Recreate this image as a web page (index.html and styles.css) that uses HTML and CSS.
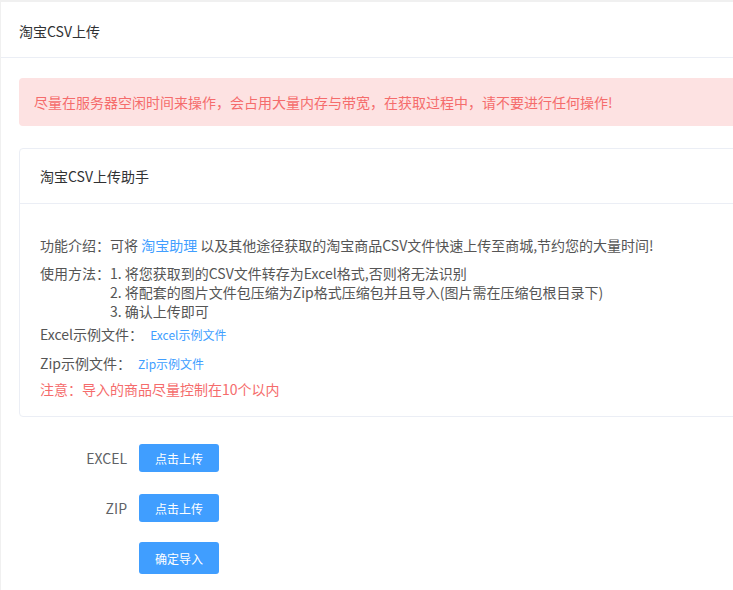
FILE: index.html
```html
<!DOCTYPE html>
<html lang="zh-CN">
<head>
    <meta charset="UTF-8">
    <meta name="viewport" content="width=device-width, initial-scale=1.0">
    <title>淘宝CSV上传</title>
    <link rel="stylesheet" href="styles.css">
</head>
<body>
    <div class="page">
        <div class="page-header">淘宝CSV上传</div>
        <div class="page-main">
            <div class="wide">
                <div class="alert">尽量在服务器空闲时间来操作，会占用大量内存与带宽，在获取过程中，请不要进行任何操作!</div>
                <div class="card">
                    <div class="card-header">淘宝CSV上传助手</div>
                    <div class="card-body">
                        <p class="intro">功能介绍：可将 <a class="link" href="#">淘宝助理</a> 以及其他途径获取的淘宝商品CSV文件快速上传至商城,节约您的大量时间!</p>
                        <div class="usage">
                            <span class="usage-label">使用方法：</span>
                            <div class="usage-steps">
                                <div>1. 将您获取到的CSV文件转存为Excel格式,否则将无法识别</div>
                                <div>2. 将配套的图片文件包压缩为Zip格式压缩包并且导入(图片需在压缩包根目录下)</div>
                                <div>3. 确认上传即可</div>
                            </div>
                        </div>
                        <p class="sample sample-excel">Excel示例文件： <a class="link small" href="#">Excel示例文件</a></p>
                        <p class="sample sample-zip">Zip示例文件： <a class="link small" href="#">Zip示例文件</a></p>
                        <p class="note">注意：导入的商品尽量控制在10个以内</p>
                    </div>
                </div>
            </div>
            <div class="upload-form">
                <div class="form-row">
                    <label class="form-label">EXCEL</label>
                    <button class="btn">点击上传</button>
                </div>
                <div class="form-row">
                    <label class="form-label">ZIP</label>
                    <button class="btn">点击上传</button>
                </div>
                <div class="form-row last">
                    <span class="form-label"></span>
                    <button class="btn btn-submit">确定导入</button>
                </div>
            </div>
        </div>
    </div>
</body>
</html>
```

FILE: styles.css
```css
* {
    margin: 0;
    padding: 0;
    box-sizing: border-box;
}
html, body {
    height: 100%;
    overflow: hidden;
}
body {
    font-family: "Noto Sans CJK SC", "Noto Sans", sans-serif;
    font-size: 14px;
    color: #555;
    background: #fff;
}
.page {
    min-height: 100%;
    border-top: 2px solid #f0f0f0;
    border-left: 1px solid #f0f0f0;
}
.page-header {
    padding: 19px 18px 16px;
    line-height: 20px;
    color: #303133;
    border-bottom: 1px solid #ebeef5;
}
.page-main {
    padding: 20px 18px 0;
}
.wide {
    margin-right: -40px;
}
.alert {
    padding: 14px 15px 14px;
    line-height: 20px;
    background: #fde2e2;
    color: #f56c6c;
    border-radius: 4px;
}
.card {
    margin-top: 22px;
    border: 1px solid #ebeef5;
    border-radius: 4px;
}
.card-header {
    padding: 17px 20px 17px;
    line-height: 20px;
    color: #303133;
    border-bottom: 1px solid #ebeef5;
}
.card-body {
    padding: 31px 20px 17px;
}
.link {
    color: #409eff;
    text-decoration: none;
}
.link.small {
    font-size: 12px;
    margin-left: 4px;
}
.intro {
    line-height: 20px;
    margin-bottom: 9px;
}
.usage {
    display: flex;
    line-height: 19px;
}
.usage-label {
    width: 70px;
    flex-shrink: 0;
}
.sample {
    line-height: 20px;
}
.sample-excel {
    margin-top: 3px;
}
.sample-zip {
    margin-top: 8px;
}
.note {
    margin-top: 5px;
    line-height: 20px;
    color: #f56c6c;
}
.upload-form {
    margin-top: 27px;
}
.form-row {
    display: flex;
    align-items: center;
    margin-bottom: 22px;
}
.form-row:nth-child(2) {
    margin-bottom: 20px;
}
.form-label {
    width: 120px;
    padding-right: 12px;
    text-align: right;
    color: #606266;
    line-height: 20px;
}
.btn {
    width: 80px;
    height: 28px;
    border: none;
    border-radius: 3px;
    background-color: #409eff;
    color: #fff;
    font-family: inherit;
    font-size: 12px;
    cursor: pointer;
}
.btn-submit {
    height: 32px;
}
.btn:hover {
    background-color: #66b1ff;
}
```
